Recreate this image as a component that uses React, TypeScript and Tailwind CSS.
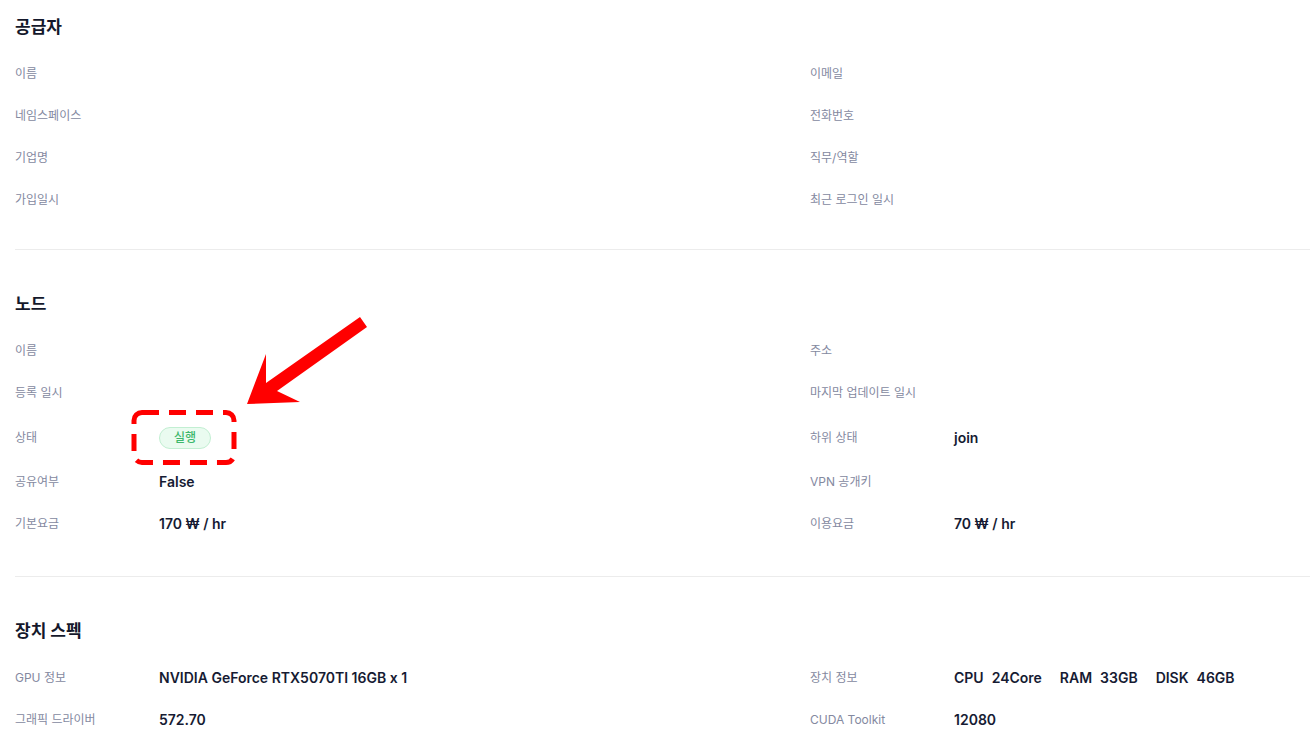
import React from 'react';

type Field = {
  label: string;
  value?: React.ReactNode;
};

type Row = [Field, Field];

const FONT = "font-['Inter','Noto_Sans_CJK_KR',sans-serif]";

const StatusBadge: React.FC<{ text: string }> = ({ text }) => (
  <span className="inline-flex h-[22px] items-center rounded-full border border-[#c2efd2] bg-[#eafbf0] px-[14px] text-[12px] font-medium text-[#3db86c]">
    {text}
  </span>
);

const DeviceSpec: React.FC = () => {
  const items = [
    ['CPU', '24Core'],
    ['RAM', '33GB'],
    ['DISK', '46GB'],
  ];
  return (
    <div className="flex gap-[18px]">
      {items.map(([k, v]) => (
        <div key={k} className="flex gap-[8px]">
          <span>{k}</span>
          <span>{v}</span>
        </div>
      ))}
    </div>
  );
};

const SECTIONS: { title: string; rows: Row[] }[] = [
  {
    title: '공급자',
    rows: [
      [{ label: '이름' }, { label: '이메일' }],
      [{ label: '네임스페이스' }, { label: '전화번호' }],
      [{ label: '기업명' }, { label: '직무/역할' }],
      [{ label: '가입일시' }, { label: '최근 로그인 일시' }],
    ],
  },
  {
    title: '노드',
    rows: [
      [{ label: '이름' }, { label: '주소' }],
      [{ label: '등록 일시' }, { label: '마지막 업데이트 일시' }],
      [
        { label: '상태', value: <StatusBadge text="실행" /> },
        { label: '하위 상태', value: 'join' },
      ],
      [{ label: '공유여부', value: 'False' }, { label: 'VPN 공개키' }],
      [
        { label: '기본요금', value: '170 ₩ / hr' },
        { label: '이용요금', value: '70 ₩ / hr' },
      ],
    ],
  },
  {
    title: '장치 스펙',
    rows: [
      [
        { label: 'GPU 정보', value: 'NVIDIA GeForce RTX5070TI 16GB x 1' },
        { label: '장치 정보', value: <DeviceSpec /> },
      ],
      [
        { label: '그래픽 드라이버', value: '572.70' },
        { label: 'CUDA Toolkit', value: '12080' },
      ],
    ],
  },
];

const FieldCell: React.FC<{ field: Field; badge: boolean }> = ({ field, badge }) => (
  <div className={`flex items-center ${badge ? 'py-[12px]' : 'py-[10px]'}`}>
    <div className="w-[144px] shrink-0 text-[12px] leading-[22px] text-[#84899f]">{field.label}</div>
    {field.value !== undefined && (
      <div className="text-[14px] font-semibold leading-[22px] text-[#161b33]">{field.value}</div>
    )}
  </div>
);

export default function App() {
  return (
    <div className={`relative min-h-[752px] w-full overflow-hidden bg-white pl-[15px] ${FONT}`}>
      {SECTIONS.map((section, i) => (
        <section
          key={section.title}
          className={`border-b border-[#ececec] ${i === 0 ? 'pb-[28px] pt-[13px]' : 'pb-[31px] pt-[40px]'}`}
        >
          <h2 className="mb-[12px] text-[17px] font-bold leading-[28px] text-[#14182b]">{section.title}</h2>
          <div className="grid grid-cols-[795px_1fr]">
            {section.rows.map((row, r) => {
              const badge = row[0].label === '상태';
              return (
                <React.Fragment key={r}>
                  <FieldCell field={row[0]} badge={badge} />
                  <FieldCell field={row[1]} badge={badge} />
                </React.Fragment>
              );
            })}
          </div>
        </section>
      ))}

      {/* annotation overlay */}
      <svg className="pointer-events-none absolute left-0 top-0" width="1310" height="752">
        <rect
          x="134"
          y="412.5"
          width="100"
          height="50"
          rx="8"
          fill="none"
          stroke="#ff0000"
          strokeWidth="5"
          strokeDasharray="17 10"
        />
        <polygon
          points="360,317 367,327 277,391 300,402 247,404 266,354 266,383"
          fill="#ff0000"
        />
      </svg>
    </div>
  );
}
